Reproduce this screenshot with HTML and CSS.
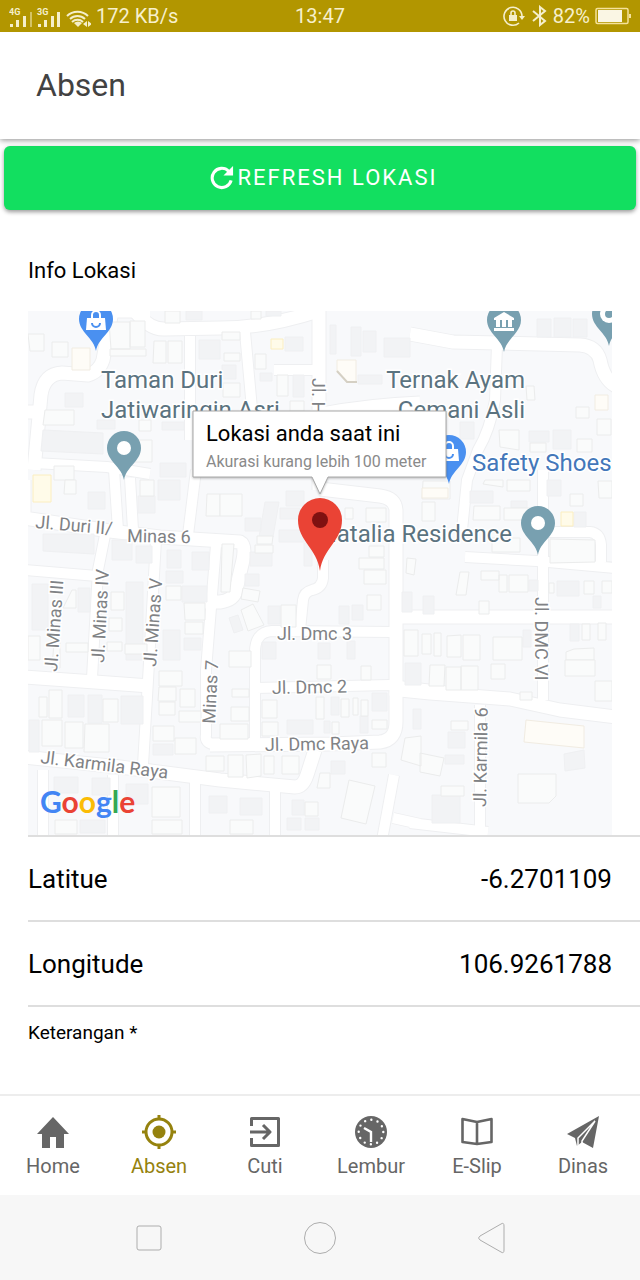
FILE: index.html
```html
<!DOCTYPE html>
<html lang="id">
<head>
<meta charset="utf-8">
<meta name="viewport" content="width=device-width, initial-scale=1">
<title>Absen</title>
<link rel="stylesheet" href="styles.css">
</head>
<body>
<div class="app">
  <div class="status">
    <div class="status-group">
      <svg class="signal" width="82" height="24" viewBox="0 0 82 24" aria-hidden="true">
        <g fill="#f5efcb">
          <text class="net" x="0" y="11">4G</text>
          <path d="M1 20h3v3h-3zM7 16h3v7h-3zM14 12h3v11h-3z"/><path d="M21 8h2v15h-2z" opacity=".5"/>
          <text class="net" x="28" y="11">3G</text>
          <path d="M29 20h3v3h-3zM35 16h3v7h-3zM42 12h3v11h-3zM48 8h3v15h-3z"/>
          <path d="M65 19l4 4 4-4a6 6 0 0 0-8 0z"/>
          <path d="M74 20l4-3v6zM79 17v6l4-3z"/>
        </g>
        <g fill="none" stroke="#f5efcb" stroke-width="2"><path d="M58 12a15 15 0 0 1 21 0M61 15a11 11 0 0 1 15 0M63 18a8 8 0 0 1 11 0"/></g>
      </svg>
      <span>172 KB/s</span>
    </div>
    <span>13:47</span>
    <div class="status-group status-right">
      <svg width="24" height="22" viewBox="0 0 24 22" aria-hidden="true">
        <path d="M17 18a9 9 0 1 1 3-7" fill="none" stroke="#f5efcb" stroke-width="1.600"/>
        <path d="M17 11h6l-3 4zM7 10h8v6H7z" fill="#f5efcb"/><path d="M9 10V8a2 2 0 0 1 4 0v2" fill="none" stroke="#f5efcb" stroke-width="1.600"/>
      </svg>
      <svg width="17" height="22" viewBox="0 0 17 22" aria-hidden="true"><path d="M2 6l12 10-5 4V2l5 4L2 16" fill="none" stroke="#f5efcb" stroke-width="2"/></svg>
      <span>82%</span>
      <svg width="36" height="18" viewBox="0 0 36 18" aria-hidden="true"><rect x="1" y="1.500" width="32" height="15" rx="1.500" fill="none" stroke="#f5e29a" stroke-width="1.500"/><path d="M3 3h24v12H3z" fill="#faf6e4"/><path d="M34 7h2v4h-2z" fill="#f5e29a"/></svg>
    </div>
  </div>

  <header class="toolbar"><h1 class="title">Absen</h1></header>

  <main class="content">
    <button class="refresh" type="button">
      <svg width="25" height="25" viewBox="0 0 26 26" aria-hidden="true"><path d="M20.500 6.500A10 10 0 1 0 23 16" fill="none" stroke="#fff" stroke-width="3.200"/><path d="M25 1v10H15z" fill="#fff"/></svg>
      <span>REFRESH LOKASI</span>
    </button>

    <h2 class="section-title">Info Lokasi</h2>

    <svg class="map" viewBox="28 311 584 524" role="img" aria-label="Peta lokasi">
      <defs>
        <path id="pin" d="M0 0C-2-13-17-19-17-32A17 17 0 0 1 17-32C17-19 2-13 0 0z"/>
        <g id="bag"><path d="M-9-36H9l1 12h-20z" fill="#fff"/><path d="M-4-36v-3a4 4 0 0 1 8 0v3" fill="none" stroke="#fff" stroke-width="2"/><path d="M-4-31a4 4 0 0 0 8 0" fill="none" stroke="#4a90f0" stroke-width="2"/></g>
        <g id="roads">
          <path class="r14" d="M28 412H37M34 470L41 395Q44 374 62 373L88 375Q99 372 103 360L112 311M112 311H150"/>
          <path class="r14" d="M128 300Q145 330 165 329L220 328Q265 328 318 311"/>
          <path class="r14" d="M319 300V490M322 414Q370 405 420 403"/>
          <path class="r10" d="M245 332L253 420M274 370H318"/>
          <path class="r10" d="M190 336V440M34 463L107 467L150 474"/>
          <path class="r14" d="M24 480V518L110 531L160 537L240 542Q246 545 243 560L236 590Q234 600 220 602H205"/>
          <path class="r10" d="M114 470L118 530M130 478L133 530M196 470L188 535"/>
          <path class="r10" d="M24 570L97 576M105 535L98 570L92 678M156 540L148 680L143 765M216 545L206 670V735Q204 745 220 745"/>
          <path class="r14" d="M24 677L95 682L150 686M24 757L120 767L220 780L295 787Q303 787 307 775L315 750"/>
          <path class="r14" d="M210 745L330 744L380 742Q396 740 396 722V510Q395 498 380 496L320 489"/>
          <path class="r10" d="M255 740V655Q254 632 272 631L395 632M255 688L390 685L450 692"/>
          <path class="r10" d="M323 560V578Q322 588 312 590Q304 592 303 600L300 630"/>
          <path class="r14" d="M390 689L430 693L510 699L560 710L616 717"/>
          <path class="r14" d="M396 617H616M410 334L453 342L580 345Q596 346 600 360Q604 382 620 388"/>
          <path class="r10" d="M497 345L495 400Q490 430 478 450L467 480L462 530M543 470V700"/>
          <path class="r10" d="M465 557L537 561L616 568M548 532H590Q600 533 601 545V562"/>
          <path class="r10" d="M480 705V833M410 823L488 832M394 775L382 840M393 818L420 824"/>
          <path class="r10" d="M275 785V840M43 770V840M113 775V840M195 777V840"/>
        </g>
      </defs>
      <rect x="28" y="311" width="584" height="524" fill="#f8f9fb"/>
      <use href="#roads" class="road-edge"/>
      <use href="#roads" class="road-fill"/>

      <g class="shade">
        <path d="M65 393h18v14h-18zM97 420h18v9h-18zM199 340h21v19h-21zM186 311h16v9h-16zM162 422h22v8h-22zM43 430l60 3v21l-62-3zM160 463h26v14h-26z"/>
        <path d="M285 337h18v14h-18zM293 375h11v22h-11zM330 325h6v29h-6zM351 327h10v29h-10zM363 331h13v21h-13zM384 338h26v19h-26zM358 375h24v9h-24zM260 373h12v8h-12zM266 311h15v5h-15zM222 365h14v14h-14z"/>
        <path d="M537 319h14v18h-14zM554 318h17v19h-17zM573 319h14v18h-14zM529 431h20v11h-20zM553 430h18v19h-18zM460 422h14v17h-14zM470 491h23v12h-23zM547 480h14v16h-14zM511 501h16v7h-16zM574 512h12v15h-12z"/>
        <path d="M43 534h51v20l-51-3zM88 492h17v17h-17zM112 540h20v20h-20zM136 546h16v17h-16zM158 480h22v20h-22zM138 496h17v17h-17zM167 550h14v18h-14zM192 552h17v18h-17zM166 571h17v12h-17zM182 586h25v16h-25zM126 582h17v78h-17zM163 630h17v30h-17zM32 584h16v46h-16zM78 588h12v24h-12zM184 638h17v12h-17z"/>
        <path d="M265 502h14l-6 35h-14zM286 491h18v15h-18zM280 508h20v11h-20zM245 518h16v13h-16zM279 530h25v12h-25zM250 552h22v14h-22zM245 574h14v12h-14zM268 606h12v18h-12zM229 618l9-3 5 15-9 3zM304 543h8v23h-8zM339 606h10v18h-10zM352 605h11v15h-11zM402 592h10v20h-10zM262 642h14v17h-14zM318 643h12v16h-12zM347 641h8v18h-8z"/>
        <path d="M68 695h16v22h-16zM88 695h14v28h-14zM121 696h22v28h-22zM29 720h10v32h-10zM54 777h24v16h-24zM92 778h18v17h-18zM126 784h22v20h-22zM80 820h25v13h-25zM153 744h20v11h-20zM209 796h18v17h-18zM240 798h22v17h-22zM292 800h12v15h-12zM287 818h14v12h-14zM305 818h14v12h-14zM331 761h14v13h-14z"/>
        <path d="M287 720h26v14h-26zM331 697h8v18h-8zM372 693h15v18h-15zM360 716h8v17h-8zM324 721h6v12h-6zM405 663h16v22h-16zM413 709h8v20h-8zM448 732h17v16h-17zM445 755h19v9h-19zM432 795h28v28h-28zM564 754l20-4 1 18-20 3zM423 596h11v18h-11zM529 580h9v11h-9zM557 581h22v15h-22zM593 596h8v12h-8zM570 624h9v17h-9zM523 630h8v17h-8z"/>
      </g>
      <g class="house">
        <path d="M28 334h16v17h-14zM52 342h16v15h-16zM45 410h29v15h-31zM109 322h21v27h-19zM130 321h15v26h-15zM154 341h12v22h-13zM168 341h14v22h-14zM165 311h15v12h-15zM139 420h12v11h-12zM54 466h20v14h-20zM136 440h16v22h-18zM110 349h36v7h-36z"/>
        <path d="M222 332h18v8h-18zM224 353h16v8h-16zM223 383h17v14h-17zM255 354h11v15h-11zM277 375h11v21h-11zM290 401h14v10h-14zM251 311h10v8h-10z"/>
        <path d="M526 386l8 0 1 14-8 0zM576 407h13v11h-13zM597 419h14v16h-14zM577 439h15v13h-15zM499 430h20v20l-19-3zM530 443h16v9h-16zM423 481h27v18h-28zM422 502h13v19h-13zM474 506h26v14h-27zM504 508h27v12h-27zM507 480h23v11h-23zM485 480h18v7l-20-3zM570 494h13v12h-13zM598 481h14v17h-13zM492 538h28v14h-28zM550 539l45 1v22l-45 1z"/>
        <path d="M65 480h11v14h-12zM140 480h14v16h-14zM207 494h13v22h-14zM111 592h13v18h-13zM109 618h13v13h-13zM107 642h15v9h-15zM72 590h4v18h-13zM166 586h15v14h-15zM184 603h21v17h-20zM185 622h18v12h-18zM125 644h22v10h-22zM66 643h22v9h-22zM28 636h12v24h-12zM54 642h6v26h-8z"/>
        <path d="M220 494h22v22h-22zM222 544h12l-4 48h-9zM257 536h16l-1 8h-15zM255 545h18v8h-18zM243 588l17 3-2 11-17-3zM241 610l12-6 11 21-16 6zM281 605h15v22h-15zM366 508h20v14h-20zM369 546h15v11h-15zM359 558h25v11h-25zM364 570h22v14h-22zM367 595h14v15h-14zM407 558l9 1-2 16-8-2zM404 630h14v26h-14zM229 651h22v16h-22zM345 508h8v11h-8z"/>
        <path d="M460 572h9l-3 23h-10zM481 571h18v9h-18zM499 575h8v17h-8zM509 575h19v17h-19zM549 583h5v10h-5zM584 581h10v13h-10zM602 581h10v12h-10zM479 601h10v13h-10zM422 634h9v20h-9zM434 633h7v23h-7zM447 636l14-1v22h-14zM463 635h17v25h-17zM493 637h29v23h-29zM582 624h8v16h-8zM598 623h8v17h-8zM566 652l8-3 20-1v12h-28z"/>
        <path d="M49 690h13v28h-13zM39 697h8v20h-8zM103 699h15v23h-15zM42 720h20v26h-20zM65 722h18v26h-18zM85 724h24v28h-25zM159 671h23v15h-23zM159 687h17v14h-18zM159 702h16v13h-16zM180 689h15v18h-15zM179 711h22v11h-22zM153 726h21v15h-21zM175 738h21v16h-21zM152 787h28v30h-28zM152 820h30v14h-30zM55 820h22v14h-22zM206 756h18v15h-18z"/>
        <path d="M232 689h17v8h-17zM231 707h18v14h-18zM220 724h28v15h-28zM262 700h15v18h-15zM262 722h16v14h-16zM228 755h15v22h-15zM246 755l15-1v22l-14 2zM264 756h10v18h-10zM282 756h17v18h-17zM316 697h8v22h-8zM341 699h8v18h-8zM353 698h5v17h-5zM361 700h7v16h-7zM332 722h7v12h-7zM372 720h15v9h-15zM317 665h14v14h-14zM361 666h10v14h-10zM372 753h14v14h-14zM320 773h10v15h-13zM349 780l26 6-9 38-25-6zM305 802h13v14h-13zM230 820h23v14h-23z"/>
        <path d="M430 665h15l-1 21h-15zM446 667h15v23h-15zM461 666h17v24h-17zM491 664h14v15h-14zM520 692h12v8h-12zM451 721h17v9h-17zM420 753l24 5-4 18-20-4zM441 786h23v10h-23zM518 774h38v22l-7 7h-31zM595 681h17v20h-17zM565 660h30v16h-30zM405 738l16-2v30l-20-6z"/>
      </g>
      <g class="gold"><path d="M271 339h12v10h-12zM33 475h18v27h-18zM561 512h12v14h-12z"/></g>
      <g class="cream"><path d="M337 360h19v22h-9l-10-10zM595 395h13v15h-13zM526 720l58 6v22l-60-6zM422 488h26v10h-26zM72 348h18v22h-18z"/></g>
      <path d="M337 371l10 11h10" fill="none" stroke="#d5d0c4" stroke-width="2"/>

      <g class="street">
        <text transform="translate(35 528) rotate(5)">Jl. Duri II/</text>
        <text transform="translate(127 542) rotate(1)">Minas 6</text>
        <text transform="translate(57 672) rotate(-86)">Jl. Minas III</text>
        <text transform="translate(104 663) rotate(-87)">Jl. Minas IV</text>
        <text transform="translate(156 667) rotate(-86)">Jl. Minas V</text>
        <text transform="translate(215 724) rotate(-87)">Minas 7</text>
        <text transform="translate(277 640)">Jl. Dmc 3</text>
        <text transform="translate(272 694) rotate(-1)">Jl. Dmc 2</text>
        <text transform="translate(265 751) rotate(-1)">Jl. Dmc Raya</text>
        <text transform="translate(40 763) rotate(7)">Jl. Karmila Raya</text>
        <text transform="translate(486 807) rotate(-89)">Jl. Karmila 6</text>
        <text transform="translate(535 597) rotate(90)">Jl. DMC VI</text>
        <text transform="translate(312 378) rotate(90)">Jl. H</text>
      </g>
      <g class="place">
        <text x="101" y="388">Taman Duri</text><text x="101" y="418">Jatiwaringin Asri</text>
        <text x="525" y="388" text-anchor="end">Ternak Ayam</text><text x="525" y="418" text-anchor="end">Cemani Asli</text>
        <text x="512" y="542" text-anchor="end">Natalia Residence</text>
        <text class="shop" x="472" y="471">Safety Shoes</text>
      </g>
      <g fill="#78a0b0">
        <use href="#pin" x="124" y="480"/><use href="#pin" x="538" y="555"/><use href="#pin" x="504" y="352"/><use href="#pin" x="609" y="346"/>
      </g>
      <g fill="#fff"><circle cx="124" cy="448" r="7"/><circle cx="538" cy="523" r="7"/><circle cx="609" cy="314" r="9"/><circle cx="609" cy="314" r="4" fill="#78a0b0"/>
        <path d="M494 318l10-6 10 6v2h-20zM496 320h4v7h-4zM502 320h4v7h-4zM508 320h4v7h-4zM494 328h20v3h-20z"/></g>
      <g fill="#4a90f0"><use href="#pin" x="96" y="351"/><use href="#pin" x="449" y="484"/></g>
      <use href="#bag" x="96" y="354"/><use href="#bag" x="449" y="485"/>
      <path d="M320 571C317 548 298 541 298 520A22 22 0 0 1 342 520C342 541 323 548 320 571z" fill="#ea4335"/><circle cx="320" cy="520" r="8" fill="#7f1111"/>

      <path class="bubble" d="M193 411H446V477H328L320 494L312 477H193z"/>
      <text class="bubble-title" x="206" y="441">Lokasi anda saat ini</text>
      <text class="bubble-note" x="206" y="467">Akurasi kurang lebih 100 meter</text>
      <text class="brand" x="40" y="813"><tspan fill="#4285f4">G</tspan><tspan fill="#ea4335">o</tspan><tspan fill="#fbbc05">o</tspan><tspan fill="#4285f4">g</tspan><tspan fill="#34a853">l</tspan><tspan fill="#ea4335">e</tspan></text>
    </svg>

    <dl class="list">
      <div class="row"><dt>Latitue</dt><dd>-6.2701109</dd></div>
      <div class="row"><dt>Longitude</dt><dd>106.9261788</dd></div>
    </dl>
    <p class="note">Keterangan *</p>
  </main>

  <nav class="tabs">
    <a class="tab" href="#home"><svg viewBox="0 0 36 36" aria-hidden="true"><path d="M18 3L2 20h5v14h8V23h6v11h8V20h5z"/></svg><span>Home</span></a>
    <a class="tab active" href="#absen" aria-current="page"><svg viewBox="0 0 36 36" aria-hidden="true"><circle cx="18" cy="18" r="13" fill="none" stroke="currentColor" stroke-width="3"/><circle cx="18" cy="18" r="6.500"/><path d="M16.500 1h3v5h-3zM16.500 30h3v5h-3zM1 16.500h5v3H1zM30 16.500h5v3h-5z"/></svg><span>Absen</span></a>
    <a class="tab" href="#cuti"><svg viewBox="0 0 36 36" aria-hidden="true"><path d="M4.500 12V4.500h27v27h-27V24M3 18h20M16 11l7 7-7 7" fill="none" stroke="currentColor" stroke-width="3" stroke-linejoin="round"/></svg><span>Cuti</span></a>
    <a class="tab" href="#lembur"><svg viewBox="0 0 36 36" aria-hidden="true"><circle cx="18" cy="18" r="16"/><circle cx="18" cy="18" r="12.300" fill="none" stroke="#fff" stroke-width="2.400" stroke-linecap="round" stroke-dasharray="0 6.440"/><path d="M11 14l7 4v10" fill="none" stroke="#fff" stroke-width="2.400"/></svg><span>Lembur</span></a>
    <a class="tab" href="#eslip"><svg viewBox="0 0 36 36" aria-hidden="true"><path d="M18 8v22M18 8L3.500 5v23L18 30l14.500-2V5z" fill="none" stroke="currentColor" stroke-width="2.600" stroke-linejoin="round"/></svg><span>E-Slip</span></a>
    <a class="tab" href="#dinas"><svg viewBox="0 0 36 36" aria-hidden="true"><path d="M34 2L2 20l8 4 2 8 5-4 11 6z"/><path d="M30 7L13 24v8M30 7L17 27v4" fill="none" stroke="#fff" stroke-width="1.500"/></svg><span>Dinas</span></a>
  </nav>

  <div class="sysnav">
    <button type="button" aria-label="Aplikasi terbaru"><svg width="36" height="36" viewBox="0 0 36 36"><rect x="6" y="6" width="24" height="24" rx="2"/></svg></button>
    <button type="button" aria-label="Beranda"><svg width="36" height="36" viewBox="0 0 36 36"><circle cx="18" cy="18" r="15.500"/></svg></button>
    <button type="button" aria-label="Kembali"><svg width="36" height="36" viewBox="0 0 36 36"><path d="M28 4Q31 2 31 6V30Q31 34 28 32L7 20Q4 18 7 16z"/></svg></button>
  </div>
</div>
</body>
</html>
```
FILE: styles.css
```css
* { box-sizing: border-box; }
body { margin: 0; background: #fff; color: #000; font-family: Roboto, "Liberation Sans", sans-serif; }
h1, h2, p, dl, dd { margin: 0; font-weight: 400; }
button { font: inherit; border: 0; }
.app { display: flex; flex-direction: column; min-height: 100vh; }

.status { position: relative; z-index: 1; display: grid; grid-template-columns: 1fr auto 1fr; align-items: center; height: 32px; padding: 0 9px; background: #b29600; color: #f7f0cc; font-size: 20px; }
.status-group { display: flex; align-items: center; gap: 5px; }
.status-right { justify-content: flex-end; }
.net { font-size: 9px; font-weight: 700; }

.toolbar { position: relative; display: flex; align-items: center; height: 107px; padding: 0 36px 2px; background: #fff; box-shadow: 0 1px 6px rgba(0, 0, 0, .45); }
.title { font-size: 32px; line-height: 40px; color: #424242; }

.content { flex: 1; }
.refresh { display: flex; align-items: center; justify-content: center; gap: 4px; width: calc(100% - 8px); height: 64px; margin: 7px 4px 0; padding: 0 0 2px 6px; border-radius: 6px; background: #12df60; color: #fff; font-size: 22px; letter-spacing: 2px; box-shadow: 0 2px 4px rgba(0, 0, 0, .4); }
.section-title { padding: 44px 28px 23px; font-size: 22px; line-height: 34px; }

.map { display: block; width: calc(100% - 56px); margin: 0 28px; }
.road-edge { --edge: 2px; stroke: #eeeff1; fill: none; }
.road-fill { --edge: 0px; stroke: #fff; fill: none; }
.r14, .r10 { stroke-linejoin: round; }
.r14 { stroke-width: calc(13px + var(--edge)); }
.r10 { stroke-width: calc(10px + var(--edge)); }
.shade { fill: #f2f3f5; stroke: #eff0f2; }
.house { fill: #fafbfb; stroke: #ebecec; }
.gold { fill: #fffbe9; stroke: #fbeec0; }
.cream { fill: #fefcf7; stroke: #f1ece2; }
.street { font-size: 18px; fill: #808285; stroke: #fff; stroke-width: 3px; paint-order: stroke; }
.place { font-size: 24px; fill: #5b7380; stroke: #fff; stroke-width: 3px; paint-order: stroke; }
.shop { fill: #4377ba; }
.bubble { fill: #fff; stroke: #a8a8a8; filter: drop-shadow(0 1px 1px rgba(0, 0, 0, .25)); }
.bubble-title { font-size: 22px; }
.bubble-note { font-size: 16px; fill: #8a8a8a; }
.brand { font-family: Lato, sans-serif; font-weight: 700; font-size: 30px; }

.list { padding-left: 28px; }
.row { display: flex; align-items: center; justify-content: space-between; height: 85px; padding-right: 28px; border-top: 2px solid #dedede; font-size: 26px; }
.note { margin-left: 28px; padding-top: 12px; border-top: 2px solid #dedede; font-size: 19px; line-height: 28px; }

.tabs { display: flex; height: 101px; padding-right: 4px; border-top: 2px solid #ededed; background: #fff; }
.tab { flex: 1; display: flex; flex-direction: column; align-items: center; padding-top: 18px; gap: 4px; color: #666; fill: currentColor; font-size: 20px; line-height: 24px; text-decoration: none; }
.tab svg { width: 36px; height: 36px; }
.tab.active { color: #95820e; }

.sysnav { display: grid; grid-template-columns: repeat(3, 1fr); height: 85px; padding: 0 64px; background: #f7f7f7; }
.sysnav button { display: flex; align-items: center; justify-content: center; background: none; fill: none; stroke: #adadad; stroke-width: 1px; }
```
